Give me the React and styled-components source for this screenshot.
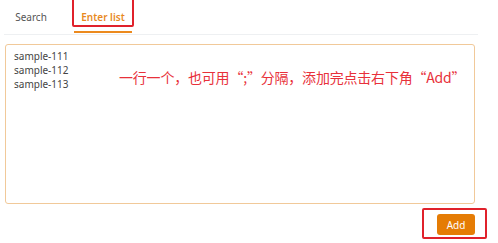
import React from 'react';
import styled, { createGlobalStyle } from 'styled-components';

const GlobalStyle = createGlobalStyle`
  body {
    margin: 0;
    background: #fff;
    font-family: "Noto Sans", "Open Sans", "Noto Sans CJK SC", sans-serif;
  }
`;

const Page = styled.div`
  width: 498px;
  height: 243px;
  display: flex;
  flex-direction: column;
  position: relative;
  overflow: hidden;
`;

const TabBar = styled.div`
  display: flex;
  align-items: flex-end;
  height: 34px;
  margin: 0 20px 0 4px;
  border-bottom: 1px solid #eef0f2;
`;

const Tab = styled.div`
  position: relative;
  width: ${props => props.width}px;
  height: 28px;
  display: flex;
  align-items: center;
  justify-content: center;
  font-size: 10px;
  font-weight: ${props => (props.active ? 600 : 400)};
  color: ${props => (props.active ? '#e8891e' : '#555')};
  margin-right: ${props => props.gap || 0}px;
  border-bottom: 2px solid ${props => (props.active ? '#ec8a1e' : 'transparent')};
  margin-bottom: 1px;
`;

const Mark = styled.div`
  position: absolute;
  border: 2px solid #e0212b;
  border-radius: 2px;
  left: ${props => props.left}px;
  top: ${props => props.top}px;
  right: ${props => props.right}px;
  bottom: ${props => props.bottom}px;
`;

const Body = styled.div`
  padding: 9px 23px 0 5px;
`;

const ListBox = styled.div`
  height: 160px;
  border: 1px solid #f1c999;
  border-radius: 3px;
  padding: 4px 8px;
  position: relative;
  box-sizing: border-box;
`;

const Line = styled.div`
  font-size: 10px;
  line-height: 14px;
  color: #444;
`;

const Note = styled.div`
  position: absolute;
  left: 113px;
  top: 23px;
  font-family: "Noto Sans CJK SC", sans-serif;
  font-size: 14px;
  line-height: 18px;
  letter-spacing: -0.2px;
  color: #e8313a;
  white-space: nowrap;
`;

const Footer = styled.div`
  display: flex;
  justify-content: flex-end;
  padding: 10px 23px 0 0;
`;

const AddButton = styled.button`
  width: 38px;
  height: 21px;
  background: #e57c05;
  border: none;
  border-radius: 3px;
  color: #fff;
  font-family: "Noto Sans", sans-serif;
  font-size: 10px;
  padding: 0;
  position: relative;
`;

const App = () => {
  return (
    <Page>
      <GlobalStyle />
      <TabBar>
        <Tab width={54} gap={16}>Search</Tab>
        <Tab width={58} active>
          Enter list
          <Mark left={-2} top={-26} right={-2} bottom={4} />
        </Tab>
      </TabBar>
      <Body>
        <ListBox>
          <Line>sample-111</Line>
          <Line>sample-112</Line>
          <Line>sample-113</Line>
          <Note>一行一个，也可用“;”分隔，添加完点击右下角“Add”</Note>
        </ListBox>
      </Body>
      <Footer>
        <AddButton>
          Add
          <Mark left={-15} top={-6} right={-12} bottom={-4} />
        </AddButton>
      </Footer>
    </Page>
  );
};

export default App;
